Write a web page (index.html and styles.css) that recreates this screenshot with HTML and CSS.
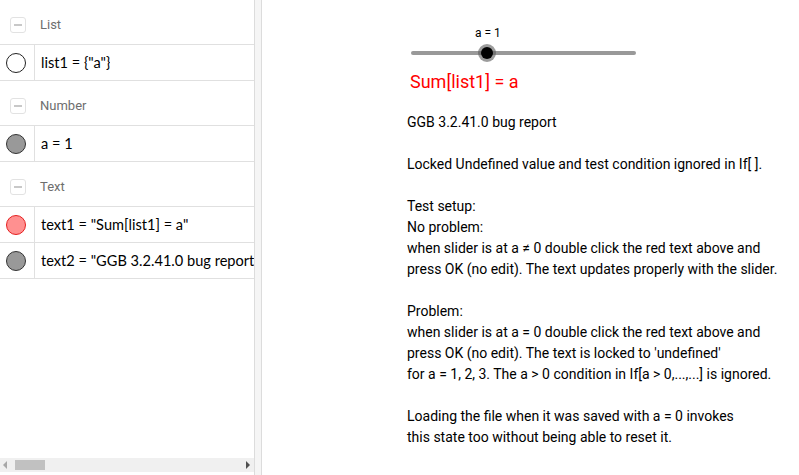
FILE: index.html
```html
<!DOCTYPE html>
<html>
<head>
<meta charset="utf-8">
<link rel="stylesheet" href="styles.css">
</head>
<body>
<div class="app">
  <div class="algebra">
    <div class="items">
      <div class="group"><span class="toggle"><span class="dash"></span></span><span class="gname">List</span></div>
      <div class="item"><div class="mark"><span class="dot dot-white"></span></div><div class="expr">list1 = {"a"}</div></div>
      <div class="group"><span class="toggle"><span class="dash"></span></span><span class="gname">Number</span></div>
      <div class="item"><div class="mark"><span class="dot dot-gray"></span></div><div class="expr">a = 1</div></div>
      <div class="group"><span class="toggle"><span class="dash"></span></span><span class="gname">Text</span></div>
      <div class="item"><div class="mark"><span class="dot dot-red"></span></div><div class="expr">text1 = "Sum[list1] = a"</div></div>
      <div class="item"><div class="mark"><span class="dot dot-gray"></span></div><div class="expr">text2 = "GGB 3.2.41.0 bug report Locked Undefined value</div></div>
    </div>
    <div class="hscroll">
      <span class="arrow arrow-left"></span>
      <div class="track"><span class="thumb"></span></div>
      <span class="arrow arrow-right"></span>
    </div>
  </div>
  <div class="splitter"></div>
  <div class="graphics">
    <div class="slider-label">a = 1</div>
    <div class="slider-line"></div>
    <div class="slider-knob"><span class="knob-core"></span></div>
    <div class="red-text">Sum[list1] = a</div>
    <div class="report">
      <p>GGB 3.2.41.0 bug report</p>
      <p>&nbsp;</p>
      <p>Locked Undefined value and test condition ignored in If[ ].</p>
      <p>&nbsp;</p>
      <p>Test setup:</p>
      <p>No problem:</p>
      <p>when slider is at a ≠ 0 double click the red text above and</p>
      <p>press OK (no edit). The text updates properly with the slider.</p>
      <p>&nbsp;</p>
      <p>Problem:</p>
      <p>when slider is at a = 0 double click the red text above and</p>
      <p>press OK (no edit). The text is locked to 'undefined'</p>
      <p>for a = 1, 2, 3. The a &gt; 0 condition in If[a &gt; 0,...,...] is ignored.</p>
      <p>&nbsp;</p>
      <p>Loading the file when it was saved with a = 0 invokes</p>
      <p>this state too without being able to reset it.</p>
    </div>
  </div>
</div>
</body>
</html>
```
FILE: styles.css
```css
* { box-sizing: border-box; }
html, body { margin: 0; padding: 0; background: #fff; }
body { font-family: Roboto, "Liberation Sans", sans-serif; color: #000; }
.app { display: flex; width: 799px; height: 475px; overflow: hidden; }

.algebra {
  width: 255px;
  flex: none;
  border-right: 1px solid #dcdcdc;
  display: flex;
  flex-direction: column;
  padding-bottom: 3px;
}
.items { flex: 1; overflow: hidden; }
.group {
  height: 45px;
  border-bottom: 1px solid #e0e0e0;
  display: flex;
  align-items: center;
  padding-top: 5px;
}
.toggle {
  width: 16px; height: 16px;
  margin-left: 10px; margin-right: 14px;
  border: 1px solid #e2e2e2;
  border-radius: 3px;
  display: flex; align-items: center; justify-content: center;
}
.dash { width: 8px; height: 2px; background: #c8c8c8; }
.gname { font-size: 13px; color: #6e6e6e; }
.item {
  height: 36px;
  border-bottom: 1px solid #e0e0e0;
  display: flex;
  white-space: nowrap;
}
.mark {
  width: 35px; flex: none;
  border-right: 1px solid #e0e0e0;
  display: flex; align-items: center; justify-content: center;
}
.dot {
  width: 20px; height: 20px; border-radius: 50%;
  border: 1px solid #222;
  margin-left: -2px;
}
.dot-white { background: #fff; }
.dot-gray { background: #999; border-color: #333; }
.dot-red { background: #ff9090; border-color: #e52020; }
.expr {
  font-family: Lato, "DejaVu Sans", sans-serif;
  font-size: 14.6px;
  padding-left: 6px;
  display: flex; align-items: center;
  overflow: hidden;
  min-width: 0;
}

.hscroll {
  height: 14px;
  background: #f0f0f0;
  display: flex;
  align-items: center;
}
.arrow { width: 0; height: 0; border-top: 4px solid transparent; border-bottom: 4px solid transparent; }
.arrow-left { border-right: 4px solid #a8a8a8; margin-left: 3px; }
.arrow-right { border-left: 4px solid #505050; margin-right: 4px; }
.track { flex: 1; height: 10px; padding-left: 8px; }
.thumb { display: block; width: 30px; height: 10px; background: #c1c1c1; }

.splitter {
  width: 7px; flex: none;
  background: #f5f5f5;
  border-right: 1px solid #dcdcdc;
}
.graphics { flex: 1; position: relative; }

.slider-label {
  position: absolute; left: 213px; top: 26px;
  font-size: 12px;
}
.slider-line {
  position: absolute; left: 149px; top: 51px;
  width: 225px; height: 4px; border-radius: 2px;
  background: #999;
}
.slider-knob {
  position: absolute; left: 216px; top: 44px;
  width: 18px; height: 18px; border-radius: 50%;
  background: rgba(90,90,90,0.6);
  display: flex; align-items: center; justify-content: center;
}
.knob-core { width: 12px; height: 12px; border-radius: 50%; background: #000; }
.red-text {
  position: absolute; left: 148px; top: 71px;
  font-size: 18px; color: #f00;
}
.report {
  position: absolute; left: 145px; top: 112px;
  font-size: 14px; line-height: 21px;
  white-space: nowrap;
}
.report p { margin: 0; }
```
